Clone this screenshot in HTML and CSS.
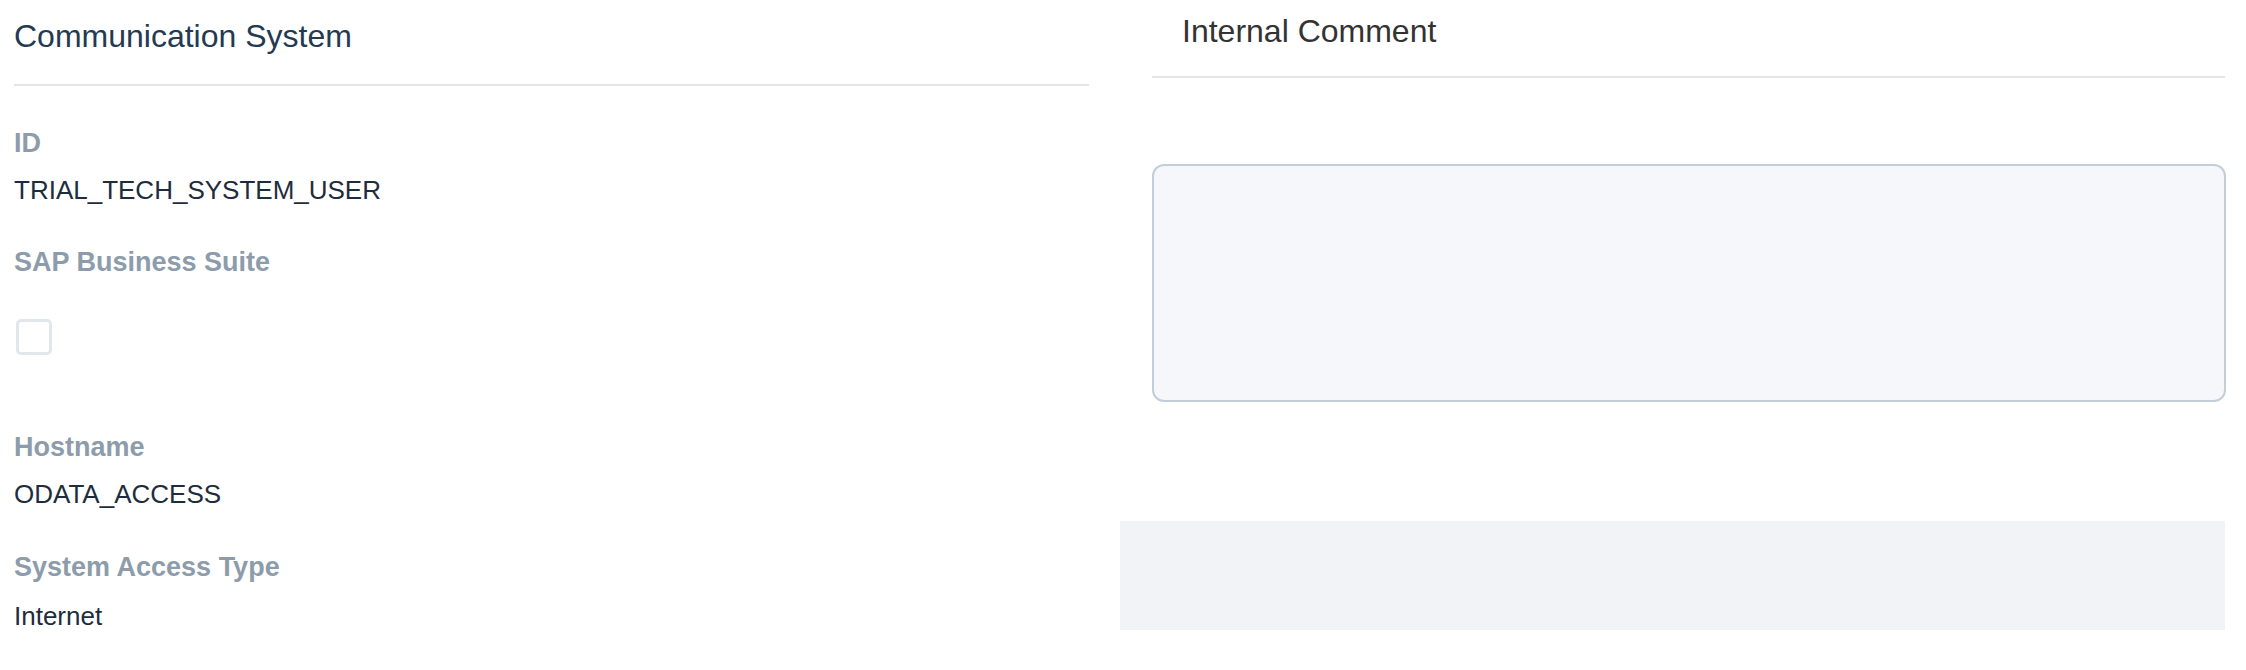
FILE: index.html
```html
<!DOCTYPE html>
<html lang="en">
<head>
<meta charset="utf-8">
<title>Communication System</title>
<link rel="stylesheet" href="styles.css">
</head>
<body>
<div class="page">
  <section class="left">
    <h2 class="left-title">Communication System</h2>
    <div class="divider"></div>
    <div class="fields">
      <div class="field">
        <div class="label">ID</div>
        <div class="value">TRIAL_TECH_SYSTEM_USER</div>
      </div>
      <div class="field">
        <div class="label">SAP Business Suite</div>
        <div class="check-wrap"><span class="checkbox"></span></div>
      </div>
      <div class="field">
        <div class="label">Hostname</div>
        <div class="value">ODATA_ACCESS</div>
      </div>
      <div class="field field-last">
        <div class="label">System Access Type</div>
        <div class="value">Internet</div>
      </div>
    </div>
  </section>
  <section class="right">
    <div class="right-inner">
      <h2 class="right-title">Internal Comment</h2>
      <div class="divider"></div>
      <div class="textarea"></div>
    </div>
    <div class="gray-block"></div>
  </section>
</div>
</body>
</html>
```
FILE: styles.css
```css
html, body {
  margin: 0;
  padding: 0;
  background: #ffffff;
}
body {
  font-family: "Liberation Sans", Arial, sans-serif;
}
.page {
  display: flex;
  gap: 31px;
  padding: 0 21px 0 14px;
  width: 2246px;
  box-sizing: border-box;
}
.left {
  width: 1075px;
  flex: none;
  padding-top: 16px;
}
.left-title {
  margin: 0;
  font-size: 32px;
  line-height: 40px;
  font-weight: 400;
  color: #243a52;
}
.divider {
  height: 2px;
  background: #e5e5e5;
}
.left .divider {
  margin-top: 28px;
}
.fields {
  display: flex;
  flex-direction: column;
  gap: 36px;
  margin-top: 39px;
}
.field {
  display: flex;
  flex-direction: column;
  gap: 11px;
}
.field-last {
  margin-top: 1px;
  gap: 13px;
}
.label {
  font-size: 27px;
  line-height: 36px;
  font-weight: 700;
  color: #8d9cab;
}
.value {
  font-size: 26px;
  line-height: 36px;
  color: #1d2d3e;
}
.check-wrap {
  padding: 28px 0 38px 2px;
  display: flex;
}
.checkbox {
  width: 36px;
  height: 36px;
  box-sizing: border-box;
  border: 3px solid #e1e7ec;
  border-radius: 5px;
  background: #ffffff;
}
.right {
  flex: 1;
  padding-top: 11px;
}
.right-inner {
  padding-left: 32px;
}
.right-title {
  margin: 0;
  padding-left: 30px;
  font-size: 32px;
  line-height: 40px;
  font-weight: 400;
  color: #333333;
}
.right .divider {
  margin-top: 25px;
}
.textarea {
  margin-top: 86px;
  height: 238px;
  box-sizing: border-box;
  border: 2px solid #c3ced8;
  border-radius: 12px;
  background: #f5f7fa;
  margin-right: -1px;
}
.gray-block {
  margin-top: 119px;
  height: 109px;
  background: #f2f3f7;
}
```
